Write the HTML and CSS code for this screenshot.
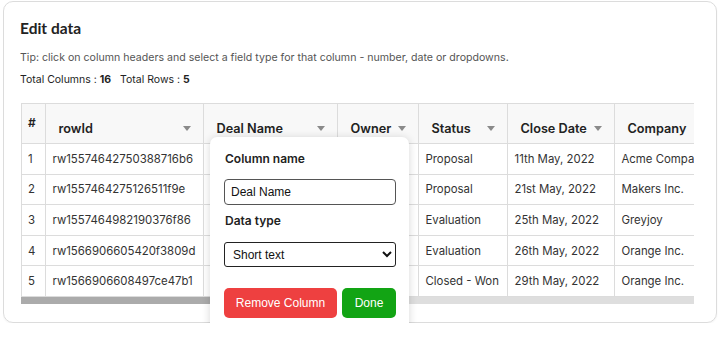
FILE: index.html
```html
<!DOCTYPE html>
<html lang="en">
<head>
    <meta charset="UTF-8">
    <meta name="viewport" content="width=device-width, initial-scale=1.0">
    <title>Edit data</title>
    <link rel="stylesheet" href="styles.css">
</head>
<body>
    <div class="card">
        <h1 class="title">Edit data</h1>
        <p class="tip">Tip: click on column headers and select a field type for that column - number, date or dropdowns.</p>
        <p class="totals">Total Columns : <b>16</b><span class="sep"></span>Total Rows : <b>5</b></p>

        <div class="grid-area">
            <div class="table-wrap">
                <table class="data-table">
                    <colgroup>
                        <col style="width: 23px">
                        <col style="width: 158px">
                        <col style="width: 134px">
                        <col style="width: 81px">
                        <col style="width: 89px">
                        <col style="width: 107px">
                        <col style="width: 130px">
                    </colgroup>
                    <thead>
                        <tr>
                            <th class="num">#</th>
                            <th><div class="th-in"><span>rowId</span><i class="caret"></i></div></th>
                            <th><div class="th-in"><span>Deal Name</span><i class="caret"></i></div></th>
                            <th><div class="th-in"><span>Owner</span><i class="caret"></i></div></th>
                            <th><div class="th-in"><span>Status</span><i class="caret"></i></div></th>
                            <th><div class="th-in"><span>Close Date</span><i class="caret"></i></div></th>
                            <th><div class="th-in"><span>Company</span><i class="caret"></i></div></th>
                        </tr>
                    </thead>
                    <tbody>
                        <tr><td>1</td><td>rw15574642750388716b6</td><td>Acme deal</td><td>John</td><td>Proposal</td><td>11th May, 2022</td><td>Acme Company</td></tr>
                        <tr><td>2</td><td>rw1557464275126511f9e</td><td>Makers deal</td><td>Jane</td><td>Proposal</td><td>21st May, 2022</td><td>Makers Inc.</td></tr>
                        <tr><td>3</td><td>rw1557464982190376f86</td><td>Greyjoy deal</td><td>John</td><td>Evaluation</td><td>25th May, 2022</td><td>Greyjoy</td></tr>
                        <tr><td>4</td><td>rw1566906605420f3809d</td><td>Orange deal</td><td>Jane</td><td>Evaluation</td><td>26th May, 2022</td><td>Orange Inc.</td></tr>
                        <tr><td>5</td><td>rw1566906608497ce47b1</td><td>Orange renewal</td><td>John</td><td>Closed - Won</td><td>29th May, 2022</td><td>Orange Inc.</td></tr>
                    </tbody>
                </table>
            </div>
            <div class="scrollbar"><div class="thumb"></div></div>

            <div class="popover">
                <label class="pop-label" for="colName">Column name</label>
                <input class="pop-input" type="text" id="colName" value="Deal Name">
                <label class="pop-label gap" for="colType">Data type</label>
                <select class="pop-select" id="colType">
                    <option>Short text</option>
                    <option>Number</option>
                    <option>Date</option>
                    <option>Dropdown</option>
                </select>
                <div class="pop-actions">
                    <button class="btn btn-remove">Remove Column</button>
                    <button class="btn btn-done">Done</button>
                </div>
            </div>
        </div>
    </div>
</body>
</html>
```

FILE: styles.css
```css
html, body {
    overflow: hidden;
}
body {
    margin: 1px 0 0 3px;
    font-family: Inter, "Noto Sans", sans-serif;
    color: #333;
    background: #fff;
}
.card {
    width: 680px;
    height: 304px;
    padding: 16px 16px 0 16px;
    border: 1px solid #dcdcdc;
    border-radius: 10px;
    box-shadow: 0 1px 2px rgba(0,0,0,0.05);
}
.title {
    margin: 0;
    font-family: Lato, sans-serif;
    font-size: 15.5px;
    line-height: 20px;
    font-weight: 700;
    color: #222;
}
.tip {
    margin: 12px 0 0 0;
    font-size: 10.6px;
    line-height: 15px;
    color: #555;
}
.totals {
    margin: 7px 0 0 0;
    font-size: 10.5px;
    line-height: 15px;
    color: #222;
}
.totals b {
    font-weight: 700;
}
.sep {
    display: inline-block;
    width: 9px;
}
.grid-area {
    position: relative;
    margin-top: 16px;
    margin-left: 1px;
    width: 673px;
}
.table-wrap {
    overflow: hidden;
    border: 1px solid #dcdcdc;
    border-right: none;
    border-bottom: none;
}
.data-table {
    border-collapse: collapse;
    table-layout: fixed;
    width: 722px;
    font-size: 11.4px;
}
.data-table th {
    height: 39px;
    padding: 0;
    background: #f8f8f8;
    border-left: 1px solid #dcdcdc;
    border-bottom: 1px solid #dcdcdc;
    text-align: left;
    font-size: 12.7px;
    font-weight: 600;
    color: #222;
}
.data-table th:first-child {
    border-left: none;
}
.data-table th.num {
    vertical-align: top;
    height: 28px;
    padding: 11px 0 0 6px;
    font-size: 12px;
}
.th-in {
    display: flex;
    align-items: center;
    justify-content: space-between;
    padding: 9px 12px 0 13px;
    white-space: nowrap;
}
.caret {
    width: 0;
    height: 0;
    margin-left: 6px;
    border-left: 4px solid transparent;
    border-right: 4px solid transparent;
    border-top: 5px solid #8a8a8a;
}
.data-table td {
    height: 29.6px;
    padding: 0 7px;
    border-left: 1px solid #dcdcdc;
    border-bottom: 1px solid #dcdcdc;
    white-space: nowrap;
    overflow: hidden;
    color: #333;
}
.data-table td:first-child {
    border-left: none;
    padding-left: 6px;
}
.scrollbar {
    height: 7px;
    background: #dedede;
}
.thumb {
    width: 300px;
    height: 7px;
    background: #ababab;
    border-radius: 0 3px 3px 0;
}
.popover {
    position: absolute;
    left: 189px;
    top: 34px;
    width: 170px;
    height: 189px;
    padding: 14px 14px 0 15px;
    background: #fff;
    border-radius: 7px;
    box-shadow: 0 1px 8px rgba(0,0,0,0.16);
    display: flex;
    flex-direction: column;
    align-items: flex-start;
}
.pop-label {
    font-size: 12px;
    line-height: 16px;
    font-weight: 600;
    color: #222;
}
.pop-label.gap {
    margin-top: 8px;
}
.pop-input {
    box-sizing: border-box;
    width: 172px;
    height: 26px;
    margin-top: 12px;
    margin-left: -1px;
    padding: 0 6px;
    border: 1px solid #555;
    border-radius: 4px;
    font-family: "Liberation Sans", Arial, sans-serif;
    font-size: 12px;
    color: #111;
}
.pop-select {
    box-sizing: border-box;
    width: 172px;
    height: 25px;
    margin-top: 13px;
    margin-left: -1px;
    padding: 0 4px;
    border: 1px solid #222;
    border-radius: 3px;
    background: #fff;
    font-family: "Liberation Sans", Arial, sans-serif;
    font-size: 12px;
    color: #111;
}
.pop-actions {
    display: flex;
    gap: 5px;
    margin-top: 21px;
    margin-left: -1px;
}
.btn {
    height: 30px;
    border: none;
    border-radius: 5px;
    color: #fff;
    font-family: "Liberation Sans", Arial, sans-serif;
    font-size: 12px;
    cursor: pointer;
}
.btn-remove {
    width: 113px;
    background: #ee4040;
}
.btn-done {
    width: 54px;
    background: #12a414;
}
```
